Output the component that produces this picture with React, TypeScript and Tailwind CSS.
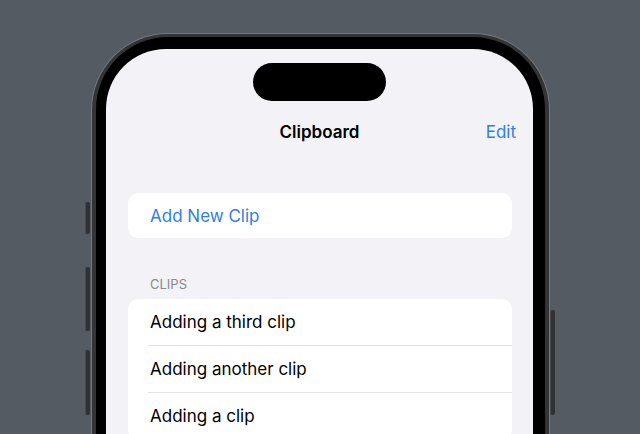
const clips = ["Adding a third clip", "Adding another clip", "Adding a clip"];

const SideButton = ({ className }: { className: string }) => (
  <div className={`absolute w-[5px] rounded-[2px] bg-[#2f3134] shadow-[inset_1px_0_0_#45484c] ${className}`} />
);

export default function App() {
  return (
    <div
      className="h-[434px] w-[640px] overflow-hidden bg-[#545b63] pt-[33px]"
      style={{ fontFamily: "Inter, 'Noto Sans', 'Liberation Sans', sans-serif" }}
    >
      <div className="relative ml-[91px] w-[459px]">
        <SideButton className="-left-[6px] top-[169px] h-[32px]" />
        <SideButton className="-left-[6px] top-[234px] h-[64px]" />
        <SideButton className="-left-[6px] top-[317px] h-[65px]" />
        <SideButton className="-right-[5px] top-[277px] h-[105px]" />

        <div className="h-[460px] rounded-t-[77px] bg-[#75787c] px-px pt-px">
          <div className="h-full rounded-t-[76px] bg-[#333436] px-[4px] pt-[3px]">
            <div className="h-full rounded-t-[72px] bg-black pt-[12px] pr-[12px] pl-[10px]">
              <div className="h-full rounded-t-[60px] bg-[#f2f2f7] pt-[14px]">
                <div className="mx-auto h-[38px] w-[133px] rounded-full bg-black" />

                <div className="mt-[20px] grid h-[22px] grid-cols-[1fr_auto_1fr] items-center px-[17px] text-[17px] leading-[22px]">
                  <span />
                  <span className="font-semibold text-black">Clipboard</span>
                  <span className="justify-self-end text-[#2f80e0]">Edit</span>
                </div>

                <div className="mt-[50px] mr-[21px] ml-[22px] flex h-[45px] items-center rounded-[10px] bg-white pl-[22px]">
                  <span className="text-[17px] leading-[22px] text-[#2f80e0]">Add New Clip</span>
                </div>

                <div className="mt-[38px] mr-[21px] mb-[7px] ml-[22px] pl-[22px] text-[13px] leading-[16px] text-[#8a8a8e]">
                  CLIPS
                </div>

                <div className="mr-[21px] ml-[22px] overflow-hidden rounded-[10px] bg-white">
                  {clips.map((clip) => (
                    <div key={clip} className="pl-[20px]">
                      <div className="flex h-[47px] items-center border-b border-[#e2e2e7] pl-[2px] text-[17px] leading-[22px] text-black">
                        {clip}
                      </div>
                    </div>
                  ))}
                </div>
              </div>
            </div>
          </div>
        </div>
      </div>
    </div>
  );
}
